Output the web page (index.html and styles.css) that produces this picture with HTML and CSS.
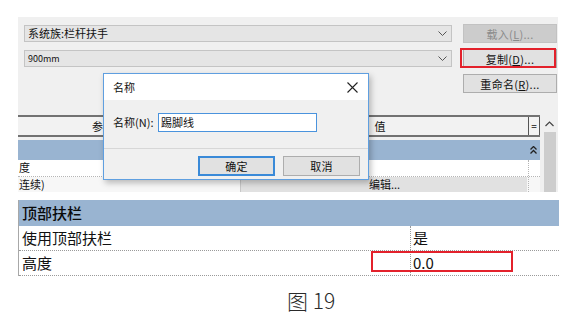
FILE: index.html
```html
<!DOCTYPE html>
<html lang="zh-CN">
  <head>
    <meta charset="UTF-8" />
    <title>图 19</title>
    <link rel="stylesheet" href="styles.css">
  </head>
  <body>
    <div class="page">
      <div class="shot">
        <div class="type-bar">
          <div class="combo">
            <span>系统族:栏杆扶手</span>
            <svg width="9" height="5" viewBox="0 0 9 5"><path d="M0.5 0.5 L4.5 4.5 L8.5 0.5" fill="none" stroke="#555" stroke-width="1"/></svg>
          </div>
          <button class="btn btn--off">载入(<u>L</u>)...</button>
          <div class="combo">
            <span class="combo__small">900mm</span>
            <svg width="9" height="5" viewBox="0 0 9 5"><path d="M0.5 0.5 L4.5 4.5 L8.5 0.5" fill="none" stroke="#555" stroke-width="1"/></svg>
          </div>
          <button class="btn btn--marked">复制(<u>D</u>)...</button>
          <span></span>
          <button class="btn">重命名(<u>R</u>)...</button>
        </div>

        <div class="props">
          <div class="props__table">
            <div class="props__head">
              <span class="head__param">参数</span>
              <span class="head__value">值</span>
              <span class="head__eq">=</span>
            </div>
            <div class="props__group">
              <span></span>
              <span></span>
              <span class="group__toggle">
                <svg width="7" height="8" viewBox="0 0 7 8"><path d="M0.5 3.5 L3.5 0.5 L6.5 3.5 M0.5 7.5 L3.5 4.5 L6.5 7.5" fill="none" stroke="#222" stroke-width="1.3"/></svg>
              </span>
            </div>
            <div class="props__row">
              <span class="cell">度</span>
              <span class="cell cell--value"></span>
              <span class="cell cell--side"></span>
            </div>
            <div class="props__row props__row--grey">
              <span class="cell">连续)</span>
              <span class="cell cell--value"><span class="edit-btn">编辑...</span></span>
              <span class="cell cell--side"></span>
            </div>
          </div>
          <div class="scroll">
            <svg width="9" height="6" viewBox="0 0 9 6"><path d="M0.5 5 L4.5 1 L8.5 5" fill="none" stroke="#444" stroke-width="1.2"/></svg>
            <div class="scroll__thumb"></div>
          </div>
        </div>

        <div class="dialog">
          <div class="dialog__title">
            <span>名称</span>
            <svg width="11" height="11" viewBox="0 0 11 11"><path d="M0.5 0.5 L10.5 10.5 M10.5 0.5 L0.5 10.5" stroke="#222" stroke-width="1.1"/></svg>
          </div>
          <div class="dialog__body">
            <span class="dialog__label">名称(N):</span>
            <span class="dialog__input">踢脚线</span>
          </div>
          <div class="dialog__foot">
            <span class="btn btn--dlg btn--focus">确定</span>
            <span class="btn btn--dlg">取消</span>
          </div>
        </div>
      </div>

      <div class="sheet">
        <div class="sheet__head">顶部扶栏</div>
        <div class="sheet__row">
          <span class="sheet__name">使用顶部扶栏</span>
          <span class="sheet__value">是</span>
        </div>
        <div class="sheet__row">
          <span class="sheet__name">高度</span>
          <span class="sheet__value sheet__value--marked">0.0</span>
        </div>
      </div>

      <div class="caption">图 19</div>
    </div>
  </body>
</html>
```

FILE: styles.css
```css
body {
  margin: 0;
  background: #ffffff;
  font-family: "Noto Sans CJK SC", "DejaVu Sans", sans-serif;
  color: #111;
}
.page {
  padding-top: 17px;
}

/* top screenshot panel */
.shot {
  position: relative;
  margin-left: 18px;
  width: 540px;
  height: 175px;
  overflow: hidden;
  background: #f0f0f0;
  font-size: 11px;
}
.type-bar {
  display: grid;
  grid-template-columns: 428px 94px;
  grid-auto-rows: 19px;
  column-gap: 11px;
  row-gap: 6px;
  padding: 7px 0 0 6px;
}
.combo {
  display: flex;
  align-items: center;
  justify-content: space-between;
  height: 17px;
  padding: 0 4px 0 3px;
  background: #e5e5e5;
  border: 1px solid #c4c4c4;
  box-sizing: border-box;
  align-self: center;
  line-height: 1;
}
.combo__small {
  font-size: 9px;
}
.btn {
  display: flex;
  align-items: center;
  justify-content: center;
  height: 19px;
  padding: 0;
  margin: 0;
  font: inherit;
  font-size: 11px;
  color: #111;
  background: #e1e1e1;
  border: 1px solid #adadad;
  box-sizing: border-box;
  letter-spacing: 0.3px;
}
.btn--off {
  color: #8a8a8a;
  background: #cccccc;
  border-color: #c2c2c2;
}
.btn--marked {
  position: relative;
  overflow: visible;
}
.btn--marked::after {
  content: "";
  position: absolute;
  left: -4px;
  right: 0;
  top: -2px;
  bottom: -1px;
  border: 2px solid #e3212b;
}

/* property grid */
.props {
  display: flex;
  margin-top: 22px;
}
.props__table {
  width: 522px;
}
.props__head,
.props__group,
.props__row {
  display: grid;
  grid-template-columns: 220px 290px 12px;
}
.props__head {
  height: 22px;
  box-sizing: border-box;
  border-top: 2px solid #727272;
  border-bottom: 2px solid #727272;
  background: #f2f2f2;
  line-height: 18px;
}
.head__param {
  padding-left: 74px;
}
.head__value {
  text-align: center;
  padding-right: 6px;
}
.head__eq {
  border-left: 1px solid #555;
  border-right: 1px solid #555;
  text-align: center;
  font-size: 10px;
}
.props__group {
  margin-top: 3px;
  height: 20px;
  background: #99b4d1;
}
.group__toggle {
  display: flex;
  align-items: center;
  padding-left: 2px;
}
.props__row {
  height: 16px;
  line-height: 15px;
  background: #ffffff;
  border-bottom: 1px dotted #b5b5b5;
}
.cell {
  padding-left: 1px;
  white-space: nowrap;
}
.cell--value {
  padding-left: 0;
}
.cell--side {
  border-left: 1px dotted #b5b5b5;
  padding-left: 0;
}
.props__row--grey {
  height: 15px;
  line-height: 14px;
  background: #f7f7f7;
  border-bottom: 0;
}
.edit-btn {
  display: block;
  height: 15px;
  margin: 0 1px 0 2px;
  padding-left: 128px;
  background: #e1e1e1;
  border-left: 1px solid #c8c8c8;
  line-height: 14px;
  font-size: 11px;
}
.scroll {
  display: flex;
  flex-direction: column;
  align-items: center;
  width: 17px;
  margin-left: 1px;
  padding-top: 6px;
  box-sizing: border-box;
}
.scroll__thumb {
  width: 12px;
  height: 60px;
  margin-top: 5px;
  background: #cdcdcd;
}

/* name dialog */
.dialog {
  position: absolute;
  left: 85px;
  top: 56px;
  width: 266px;
  height: 107px;
  box-sizing: border-box;
  border: 1px solid #5f9fe0;
  background: #f0f0f0;
  box-shadow: 2px 3px 6px rgba(0, 0, 0, 0.25);
  display: flex;
  flex-direction: column;
}
.dialog__title {
  display: flex;
  align-items: center;
  justify-content: space-between;
  height: 26px;
  padding: 0 10px 0 9px;
  background: #ffffff;
  font-size: 11px;
}
.dialog__body {
  display: flex;
  align-items: center;
  height: 49px;
  padding: 0 0 4px 9px;
  box-sizing: border-box;
  border-bottom: 1px solid #d7d7d7;
}
.dialog__label {
  width: 45px;
}
.dialog__input {
  width: 159px;
  height: 19px;
  box-sizing: border-box;
  border: 1px solid #4a93dd;
  background: #ffffff;
  padding-left: 2px;
  line-height: 16px;
}
.dialog__foot {
  display: flex;
  gap: 8px;
  padding: 7px 0 0 94px;
}
.btn--dlg {
  width: 77px;
  height: 20px;
}
.btn--focus {
  border: 2px solid #3a8ad8;
}

/* bottom table */
.sheet {
  margin: 8px 0 0 18px;
  width: 540px;
  border-left: 1px solid #a8a8a8;
  font-size: 15px;
}
.sheet__head {
  height: 26px;
  line-height: 26px;
  padding-left: 3px;
  background: #99b4d1;
  font-weight: 500;
  color: #0a0a0a;
}
.sheet__row {
  display: grid;
  grid-template-columns: 391px 1fr;
  height: 25px;
  line-height: 24px;
  box-sizing: border-box;
  border-bottom: 1px dotted #9a9a9a;
}
.sheet__name {
  padding-left: 3px;
}
.sheet__value {
  position: relative;
  padding-left: 2px;
  border-left: 1px dotted #9a9a9a;
}
.sheet__value--marked::before {
  content: "";
  position: absolute;
  left: -40px;
  top: 0;
  width: 142px;
  height: 21px;
  box-sizing: border-box;
  border: 2px solid #e3212b;
}

.caption {
  margin-top: 11px;
  padding-left: 287px;
  font-size: 21px;
  line-height: 26px;
  color: #2a2a2a;
  font-weight: 300;
}
```
